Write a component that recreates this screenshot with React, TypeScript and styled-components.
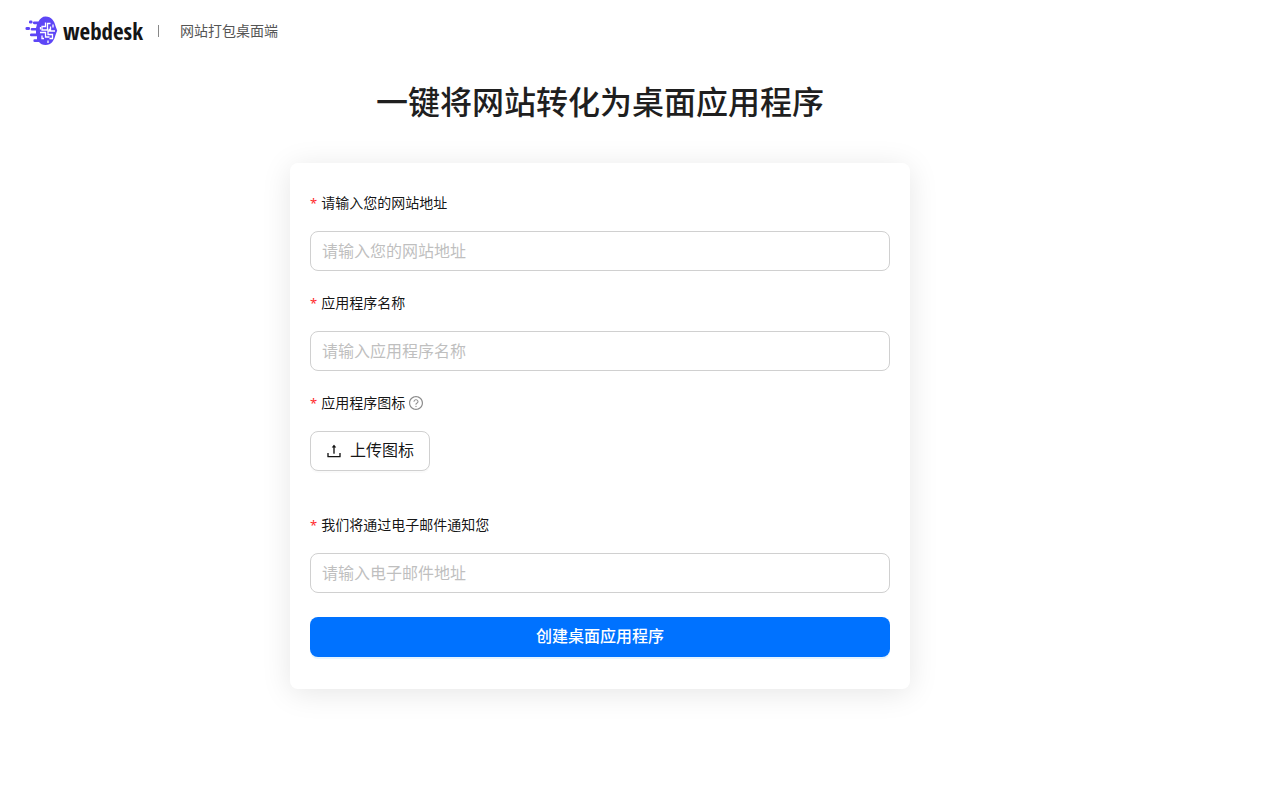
import React from "react";
import styled, { createGlobalStyle } from "styled-components";

const GlobalStyle = createGlobalStyle`
  *, *::before, *::after { box-sizing: border-box; }
  body {
    margin: 0;
    background: #fff;
    color: rgba(0, 0, 0, 0.92);
    font-family: "Liberation Sans", "Noto Sans CJK SC", sans-serif;
    font-size: 14px;
    line-height: 22px;
  }
  button, input { font-family: inherit; }
`;

const Header = styled.header`
  display: flex;
  align-items: center;
  height: 62px;
  padding: 0 24px;
`;

const Brand = styled.a`
  display: flex;
  align-items: center;
  gap: 5px;
  color: #151515;
  text-decoration: none;
`;

const BrandName = styled.span`
  font-family: "Open Sans Condensed", "Noto Sans", sans-serif;
  font-size: 23px;
  font-weight: 700;
  line-height: 32px;
`;

const Divider = styled.span`
  width: 1px;
  height: 12px;
  margin: 0 21px 0 15px;
  background: #888;
`;

const Tagline = styled.span`
  color: #555;
`;

const Main = styled.main`
  max-width: 1200px;
  padding: 17px 20px 40px;
`;

const Title = styled.h1`
  margin: 0 0 36px;
  color: #1f1f1f;
  font-size: 32px;
  font-weight: 500;
  line-height: 48px;
  text-align: center;
`;

const Card = styled.form`
  max-width: 620px;
  margin: 0 auto;
  padding: 20px 20px 32px;
  border-radius: 8px;
  background: #fff;
  box-shadow: 0 4px 30px rgba(0, 0, 0, 0.1);
`;

const Field = styled.div<{ $gap: number }>`
  margin-bottom: ${(p) => p.$gap}px;
`;

const Label = styled.label`
  display: flex;
  align-items: center;
  gap: 4px;
  height: 40px;
  margin-bottom: 8px;
`;

const Star = styled.span`
  color: #ff2a2d;
  font-family: "Noto Sans", sans-serif;
  font-size: 13px;
`;

const TextInput = styled.input`
  display: block;
  width: 100%;
  height: 40px;
  padding: 2px 11px 0;
  border: 1px solid #d0d0d0;
  border-radius: 8px;
  background: #fff;
  color: inherit;
  font-size: 16px;
  line-height: 24px;
  &::placeholder { color: #bfbfbf; opacity: 1; }
  &:focus { outline: none; border-color: #0072ff; }
`;

const UploadButton = styled.button`
  display: flex;
  align-items: center;
  gap: 8px;
  height: 40px;
  padding: 0 15px;
  border: 1px solid #d0d0d0;
  border-radius: 8px;
  background: #fff;
  box-shadow: 0 2px 0 rgba(0, 0, 0, 0.02);
  color: inherit;
  font-size: 16px;
  line-height: 24px;
  cursor: pointer;
`;

const SubmitButton = styled.button`
  display: block;
  width: 100%;
  height: 40px;
  border: 0;
  border-radius: 8px;
  background: #0072ff;
  box-shadow: 0 2px 0 rgba(5, 145, 255, 0.1);
  color: #fff;
  font-size: 16px;
  font-weight: 500;
  line-height: 24px;
  cursor: pointer;
`;

const LogoMark = () => (
  <svg width="34" height="32" viewBox="0 0 34 32" aria-hidden="true">
    <g fill="#5d46f6">
      <path d="M21.500 1.500c6 0 9 5 10 9.500l1.700 4.500-1.700 4.500C30.300 25 27.500 30 21.500 30c-3 0-5-1-6.500-3h-4.300a1.300 1.300 0 0 1 0-2.700h2.300v-3H7.300a1.300 1.300 0 0 1 0-2.700h4.700v-3H8a1.300 1.300 0 0 1 0-2.700h4l1-3.700h-2.800a1.300 1.300 0 0 1 0-2.700h4.300C16 3.500 18.500 1.500 21.500 1.500z" />
      <rect x="5" y="5.500" width="3.500" height="3" rx="1.300" />
      <rect x="1.500" y="12" width="4.500" height="3" rx="1.300" />
    </g>
    <g fill="none" stroke="#fff" strokeWidth="1.300">
      <path d="M21.500 7.500v4h-3.500v3.500h5.500V8.500h3" />
      <path d="M26.500 11.500v3h-2M31 16h-7v3.500h4.500v4h-3" />
      <path d="M16 17.500h5.500v4.500h4M18 20.500v3h2" />
      <path d="M24 25.500v2.500M29 9.500v3M16.500 12v2.500" />
    </g>
  </svg>
);

const HelpIcon = () => (
  <svg width="14" height="14" viewBox="64 64 896 896" fill="#8c8c8c" aria-hidden="true">
    <path d="M512 64C264.600 64 64 264.600 64 512s200.600 448 448 448 448-200.600 448-448S759.400 64 512 64zm0 820c-205.400 0-372-166.600-372-372s166.600-372 372-372 372 166.600 372 372-166.600 372-372 372z" />
    <path d="M623.600 316.700C593.600 290.400 554 276 512 276s-81.600 14.500-111.600 40.700C369.200 344 352 380.700 352 420v7.600c0 4.400 3.600 8 8 8h48c4.400 0 8-3.600 8-8V420c0-44.100 43.100-80 96-80s96 35.900 96 80c0 31.100-22 59.600-56.100 72.700-21.200 8.100-39.200 22.300-52.100 40.900-13.100 19-19.900 41.800-19.900 64.900V620c0 4.400 3.600 8 8 8h48c4.400 0 8-3.600 8-8v-22.700a48.300 48.300 0 0130.900-44.800c59-22.700 97.100-74.700 97.100-132.500.1-39.300-17.100-76-48.300-103.300zM472 732a40 40 0 1080 0 40 40 0 10-80 0z" />
  </svg>
);

const UploadIcon = () => (
  <svg width="16" height="16" viewBox="64 64 896 896" fill="currentColor" aria-hidden="true">
    <path d="M400 317.700h73.900V656c0 4.400 3.600 8 8 8h60c4.400 0 8-3.600 8-8V317.700H624c6.700 0 10.400-7.700 6.300-12.900L518.300 163a8 8 0 00-12.600 0l-112 141.700c-4.100 5.300-.4 13 6.300 13zM878 626h-60c-4.400 0-8 3.600-8 8v154H214V634c0-4.400-3.600-8-8-8h-60c-4.400 0-8 3.600-8 8v198c0 17.700 14.300 32 32 32h684c17.700 0 32-14.300 32-32V634c0-4.400-3.600-8-8-8z" />
  </svg>
);

interface TextFieldProps {
  id: string;
  label: string;
  placeholder: string;
  type: string;
  gap: number;
}

const TextField = ({ id, label, placeholder, type, gap }: TextFieldProps) => (
  <Field $gap={gap}>
    <Label htmlFor={id}>
      <Star>*</Star>
      {label}
    </Label>
    <TextInput id={id} type={type} placeholder={placeholder} required />
  </Field>
);

export default function App() {
  return (
    <>
      <GlobalStyle />
      <Header>
        <Brand href="#">
          <LogoMark />
          <BrandName>webdesk</BrandName>
        </Brand>
        <Divider />
        <Tagline>网站打包桌面端</Tagline>
      </Header>
      <Main>
        <Title>一键将网站转化为桌面应用程序</Title>
        <Card onSubmit={(e) => e.preventDefault()}>
          <TextField id="url" type="url" label="请输入您的网站地址" placeholder="请输入您的网站地址" gap={12} />
          <TextField id="name" type="text" label="应用程序名称" placeholder="请输入应用程序名称" gap={12} />
          <Field $gap={34}>
            <Label htmlFor="icon">
              <Star>*</Star>
              应用程序图标
              <HelpIcon />
            </Label>
            <UploadButton id="icon" type="button">
              <UploadIcon />
              上传图标
            </UploadButton>
          </Field>
          <TextField id="email" type="email" label="我们将通过电子邮件通知您" placeholder="请输入电子邮件地址" gap={24} />
          <SubmitButton type="submit">创建桌面应用程序</SubmitButton>
        </Card>
      </Main>
    </>
  );
}
